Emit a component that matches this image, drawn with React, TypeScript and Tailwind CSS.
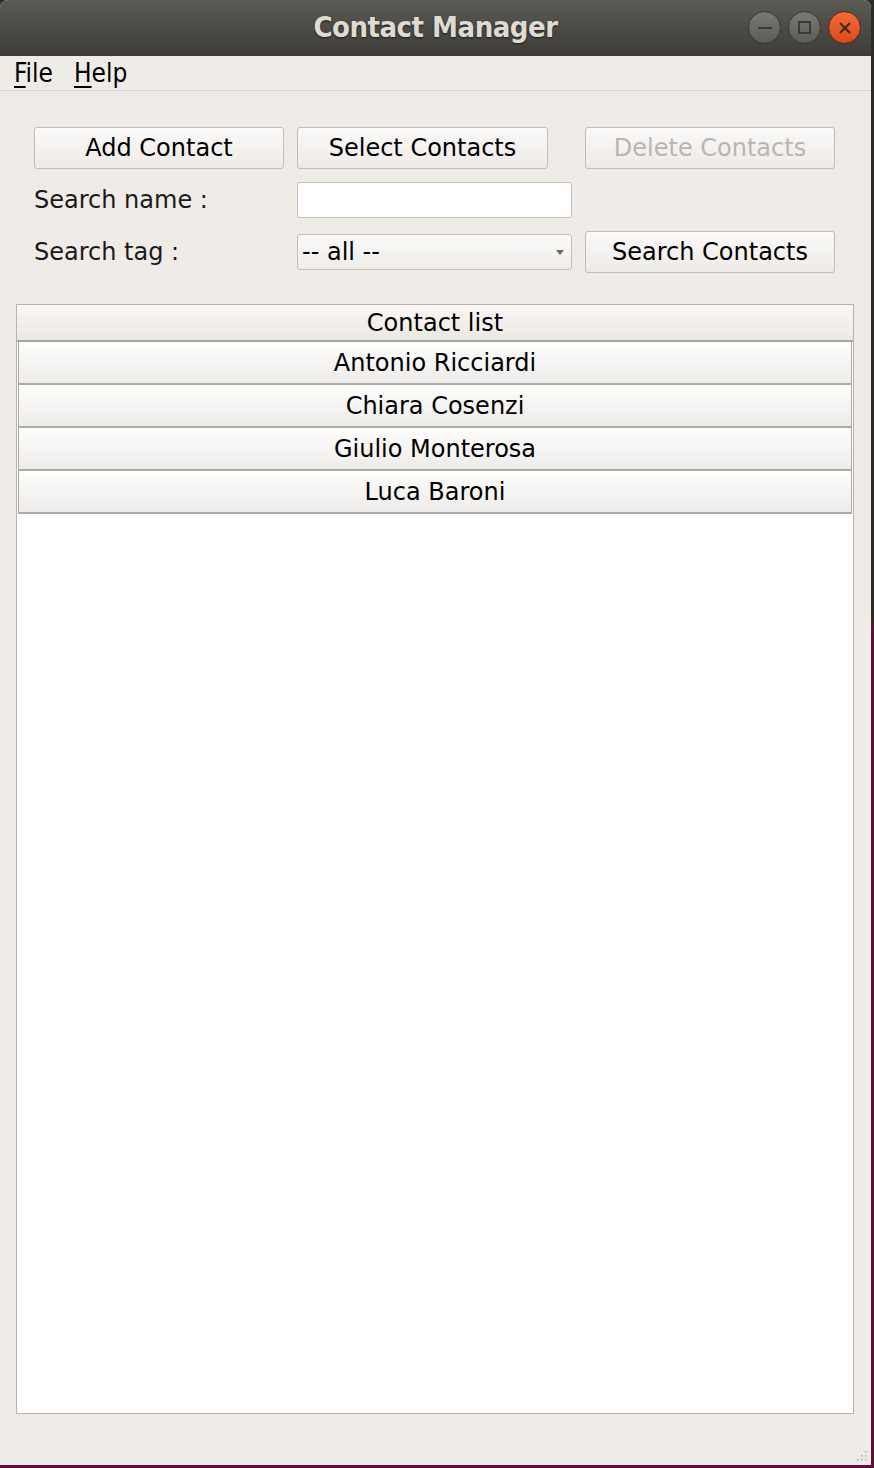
import React from 'react';

// ── Data ─────────────────────────────────────────────────────────────────────
const contacts = ['Antonio Ricciardi', 'Chiara Cosenzi', 'Giulio Monterosa', 'Luca Baroni'];

const btn =
  'h-[42px] rounded-[3px] border border-[#c3beb8] bg-gradient-to-b from-[#fbfaf9] to-[#edeae7] text-[24px] flex items-center justify-center';

// ── Title bar buttons ────────────────────────────────────────────────────────
const WinButtons: React.FC = () => (
  <div className="absolute right-[10px] top-[11px] flex gap-[7px]">
    <div className="w-[33px] h-[33px] rounded-full border border-[#36352f] bg-gradient-to-b from-[#7a7973] to-[#5c5b56] flex items-center justify-center">
      <div className="w-[14px] h-[2px] bg-[#3a3934]" />
    </div>
    <div className="w-[33px] h-[33px] rounded-full border border-[#36352f] bg-gradient-to-b from-[#7a7973] to-[#5c5b56] flex items-center justify-center">
      <div className="w-[13px] h-[13px] border-2 border-[#3a3934]" />
    </div>
    <div className="w-[33px] h-[33px] rounded-full border border-[#4a2c1c] bg-gradient-to-b from-[#f26b3a] to-[#dd4814] flex items-center justify-center">
      <svg width="14" height="14" viewBox="0 0 14 14">
        <path d="M2 2 L12 12 M12 2 L2 12" stroke="#3b2a1c" strokeWidth="2" />
      </svg>
    </div>
  </div>
);

// ══════════════════════════════════════════════════════════════════════════════
// APP
// ══════════════════════════════════════════════════════════════════════════════
export default function App() {
  return (
    <div
      className="w-[874px] h-[1468px] overflow-hidden bg-[linear-gradient(to_bottom,#2c2b2a_0%,#2c2b2a_42%,#5e1138_43%,#5e1138_100%)]"
      style={{ fontFamily: '"DejaVu Sans", sans-serif' }}
    >
      <div className="w-[871px] h-[1465px] flex flex-col bg-[#efebe7] rounded-t-[8px] overflow-hidden">

        {/* Title bar */}
        <div className="relative h-[56px] shrink-0 bg-gradient-to-b from-[#5b5a54] to-[#3d3c38] flex items-center justify-center">
          <span
            className="text-[29px] font-bold text-[#dfdbd2] tracking-[-0.5px] [text-shadow:0_1px_2px_#1e1e1c]"
            style={{ fontFamily: '"DejaVu Sans Condensed", "DejaVu Sans", sans-serif' }}
          >
            Contact Manager
          </span>
          <WinButtons />
        </div>

        {/* Menu bar */}
        <div
          className="h-[35px] shrink-0 border-b border-[#d8d3cd] flex items-center gap-[21px] pl-[14px] text-[26px] leading-none text-black"
          style={{ fontFamily: '"DejaVu Sans Condensed", "DejaVu Sans", sans-serif' }}
        >
          <span><span className="underline underline-offset-[4px]">F</span>ile</span>
          <span><span className="underline underline-offset-[4px]">H</span>elp</span>
        </div>

        {/* Controls */}
        <div className="pt-[36px] pl-[34px] grid grid-cols-[250px_275px_250px] grid-rows-[42px_36px_42px] gap-x-[13px] gap-y-[13px] text-black">
          <div className={btn}>Add Contact</div>
          <div className={`${btn} w-[251px]`}>Select Contacts</div>
          <div className={`${btn} text-[#bab5b0]`}>Delete Contacts</div>

          <div className="flex items-center text-[24px] text-[#1a1a1a]">Search name :</div>
          <div className="h-[36px] rounded-[3px] border border-[#c3beb8] bg-white" />
          <div />

          <div className="flex items-center text-[24px] text-[#1a1a1a]">Search tag :</div>
          <div className="self-center h-[36px] rounded-[3px] border border-[#c3beb8] bg-gradient-to-b from-[#fbfaf9] to-[#efece9] flex items-center justify-between pl-[4px] pr-[7px] text-[24px]">
            <span>-- all --</span>
            <svg width="8" height="5" viewBox="0 0 8 5"><path d="M0 0 L8 0 L4 5 Z" fill="#6b6864" /></svg>
          </div>
          <div className={btn}>Search Contacts</div>
        </div>

        {/* Contact list */}
        <div className="mt-[31px] ml-[16px] w-[838px] h-[1110px] border border-[#b9b4ae] bg-white flex flex-col text-[24px] text-black">
          <div className="h-[37px] shrink-0 bg-gradient-to-b from-[#faf7f4] to-[#ebe8e4] border-b-2 border-[#aaa6a1] flex items-center justify-center">
            Contact list
          </div>
          {contacts.map(name => (
            <div
              key={name}
              className="h-[43px] shrink-0 mx-px bg-gradient-to-b from-[#fdfdfc] to-[#eeecea] border-l border-r border-b-2 border-[#aeaaa5] flex items-center justify-center"
            >
              {name}
            </div>
          ))}
        </div>

        {/* Resize grip */}
        <div className="mt-auto self-end mr-[4px] mb-[4px]">
          <svg width="12" height="12" viewBox="0 0 12 12">
            {[[10, 2], [10, 6], [6, 6], [10, 10], [6, 10], [2, 10]].map(([x, y]) => (
              <rect key={`${x}-${y}`} x={x} y={y} width="1.5" height="1.5" fill="#b3aea8" />
            ))}
          </svg>
        </div>
      </div>
    </div>
  );
}
